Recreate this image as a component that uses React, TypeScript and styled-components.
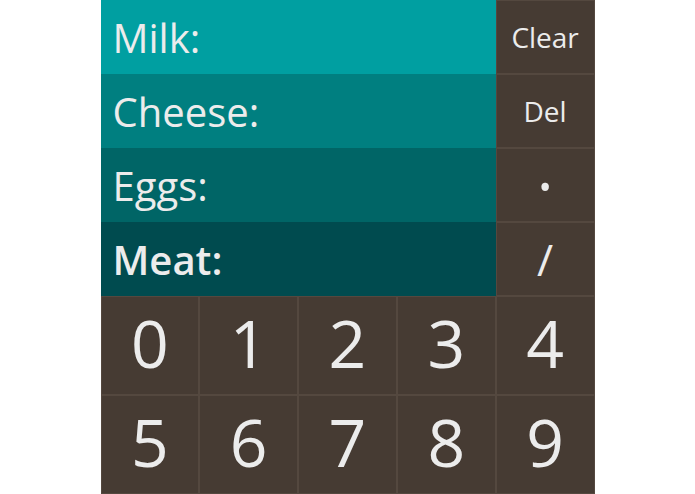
import React from 'react';
import styled, { createGlobalStyle } from 'styled-components';

const labels = [
  { name: 'Milk', bg: '#009fa1' },
  { name: 'Cheese', bg: '#007f80' },
  { name: 'Eggs', bg: '#006566' },
  { name: 'Meat', bg: '#004b4f', active: true },
];

const sideKeys = [
  { label: 'Clear', size: 28 },
  { label: 'Del', size: 28 },
  { label: '·', size: 64 },
  { label: '/', size: 44 },
];

const digits = ['0', '1', '2', '3', '4', '5', '6', '7', '8', '9'];

const App: React.FC = () => {
  return (
    <>
      <GlobalStyle />
      <Pad>
        <Top>
          <Labels>
            {labels.map(l => (
              <Label key={l.name} $bg={l.bg} $active={l.active}>
                {l.name}:
              </Label>
            ))}
          </Labels>
          <Side>
            {sideKeys.map(k => (
              <Key key={k.label} $size={k.size}>
                {k.label}
              </Key>
            ))}
          </Side>
        </Top>
        <Digits>
          {digits.map(d => (
            <Key key={d} $size={66} $lift={8}>
              {d}
            </Key>
          ))}
        </Digits>
      </Pad>
    </>
  );
};

export default App;

const GlobalStyle = createGlobalStyle`
  body {
    margin: 0;
    background: #fff;
    font-family: 'Open Sans', 'Noto Sans', sans-serif;
  }
`;

const Pad = styled.div`
  width: 494px;
  height: 494px;
  margin: 0 auto;
  display: flex;
  flex-direction: column;
  background: #463b33;
`;

const Top = styled.div`
  display: flex;
  height: 296px;
`;

const Labels = styled.div`
  flex: 4;
  display: flex;
  flex-direction: column;
`;

const Label = styled.div<{ $bg: string; $active?: boolean }>`
  flex: 1;
  display: flex;
  align-items: center;
  padding-left: 12px;
  background: ${p => p.$bg};
  color: #ececec;
  font-size: 40px;
  font-weight: ${p => (p.$active ? 600 : 400)};
`;

const Side = styled.div`
  flex: 1;
  display: grid;
  grid-template-rows: repeat(4, 1fr);
`;

const Digits = styled.div`
  flex: 1;
  display: grid;
  grid-template-columns: repeat(5, 1fr);
  grid-template-rows: repeat(2, 1fr);
`;

const Key = styled.div<{ $size: number; $lift?: number }>`
  display: flex;
  align-items: center;
  justify-content: center;
  padding-bottom: ${p => p.$lift ?? 0}px;
  box-shadow: inset 0 0 0 1px #54483f;
  color: #ececec;
  font-size: ${p => p.$size}px;
  line-height: 1;
  user-select: none;
`;
